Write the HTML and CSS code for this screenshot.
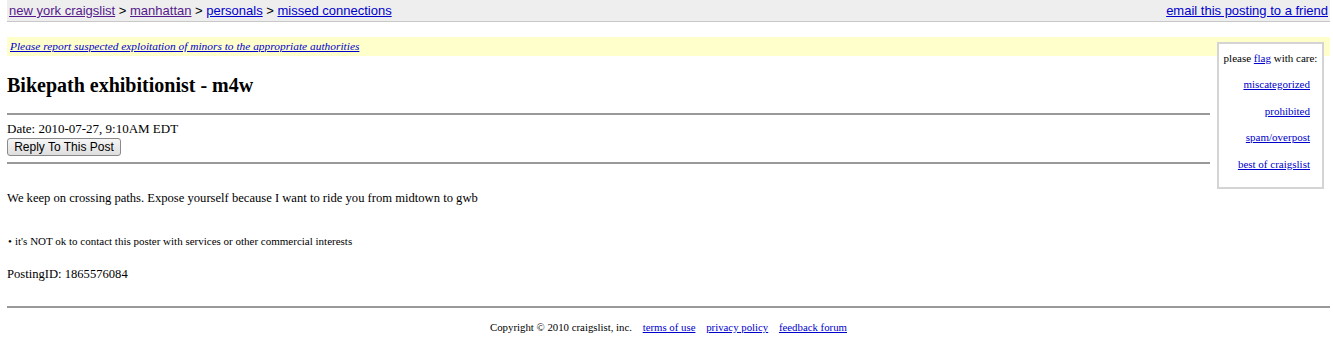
FILE: index.html
```html
<!DOCTYPE html>
<html lang="en">
<head>
    <meta charset="UTF-8">
    <title>Bikepath exhibitionist - m4w</title>
    <link rel="stylesheet" href="styles.css">
</head>
<body>
    <div class="page">
        <div class="topbar">
            <div class="crumbs">
                <a class="visited" href="#">new york craigslist</a> &gt;
                <a class="visited" href="#">manhattan</a> &gt;
                <a href="#">personals</a> &gt;
                <a href="#">missed connections</a>
            </div>
            <a href="#">email this posting to a friend</a>
        </div>

        <div class="notice">
            <a href="#">Please report suspected exploitation of minors to the appropriate authorities</a>
        </div>

        <div class="flags">
            <div class="flags-title">please <a href="#">flag</a> with care:</div>
            <a href="#">miscategorized</a>
            <a href="#">prohibited</a>
            <a href="#">spam/overpost</a>
            <a href="#">best of craigslist</a>
        </div>

        <div class="posting">
            <h2>Bikepath exhibitionist - m4w</h2>
            <hr>
            <div class="date">Date: 2010-07-27, 9:10AM EDT</div>
            <button class="reply">Reply To This Post</button>
            <hr class="rule-after">
            <div class="body">We keep on crossing paths. Expose yourself because I want to ride you from midtown to gwb</div>
            <ul class="notes">
                <li>it's NOT ok to contact this poster with services or other commercial interests</li>
            </ul>
            <div class="posting-id">PostingID: 1865576084</div>
        </div>

        <hr class="rule-full">
        <div class="footer">
            Copyright &copy; 2010 craigslist, inc.
            <a href="#">terms of use</a>
            <a href="#">privacy policy</a>
            <a href="#">feedback forum</a>
        </div>
    </div>
</body>
</html>
```

FILE: styles.css
```css
body {
    margin: 0;
    font-family: 'Liberation Serif', 'Times New Roman', serif;
    color: #000;
    background-color: #fff;
}

a {
    color: #0000cc;
}

.page {
    position: relative;
    padding: 0 3px 0 7px;
}

.topbar {
    display: flex;
    justify-content: space-between;
    height: 21px;
    line-height: 21px;
    padding: 0 2px;
    background-color: #eeeeee;
    border-bottom: 1px solid #c8c8c8;
    font-family: 'Liberation Sans', Arial, sans-serif;
    font-size: 13px;
}

.topbar a.visited {
    color: #551a8b;
}

.notice {
    margin-top: 15px;
    height: 19px;
    line-height: 19px;
    padding-left: 3px;
    background-color: #ffffcc;
    font-size: 11.4px;
    font-style: italic;
}

.flags {
    position: absolute;
    top: 42px;
    right: 9px;
    width: 103px;
    height: 143px;
    background-color: #fff;
    border: 2px solid #d4d4d4;
    display: flex;
    flex-direction: column;
    align-items: flex-end;
    font-size: 11px;
}

.flags-title {
    align-self: center;
    margin-top: 8px;
    margin-bottom: 14px;
}

.flags a {
    margin-right: 12px;
    line-height: 12px;
    margin-bottom: 14.5px;
}

.flags-title a {
    margin: 0;
}

.posting {
    margin-right: 120px;
}

h2 {
    margin: 18px 0 0;
    font-size: 20px;
    line-height: 22px;
}

hr {
    margin: 0;
    height: 0;
    border: none;
    border-top: 2px solid #999999;
}

.posting hr {
    margin-top: 17px;
}

.date {
    margin-top: 6px;
    font-size: 13px;
    line-height: 16px;
}

.reply {
    display: block;
    margin-top: 1px;
    width: 114px;
    height: 18px;
    padding: 0;
    font-family: 'Liberation Sans', Arial, sans-serif;
    font-size: 12px;
    color: #000;
    background: linear-gradient(#f6f6f6, #dedede);
    border: 1px solid #8a8a8a;
    border-radius: 3px;
}

.posting hr.rule-after {
    margin-top: 6px;
}

.body {
    margin-top: 27px;
    font-size: 12.6px;
    line-height: 15px;
}

.notes {
    margin: 29px 0 0;
    padding: 0;
    list-style: none;
    font-size: 11px;
    line-height: 12px;
}

.notes li::before {
    content: "\2022";
    display: inline-block;
    width: 8px;
    padding-left: 1px;
    box-sizing: border-box;
}

.posting-id {
    margin-top: 20px;
    font-size: 12.6px;
    line-height: 15px;
}

.rule-full {
    margin-top: 24px;
}

.footer {
    margin-top: 13px;
    text-align: center;
    font-size: 10.8px;
    line-height: 12px;
}

.footer a {
    margin-left: 8px;
}
```
